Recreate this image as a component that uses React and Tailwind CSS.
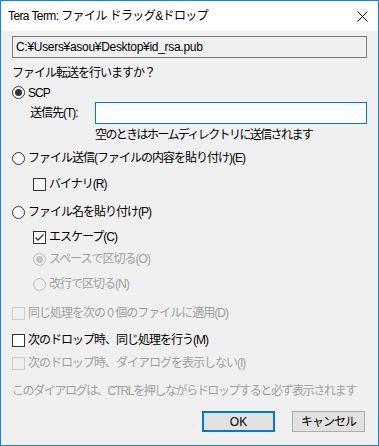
import React from 'react';

const font = { fontFamily: '"Liberation Sans", "Noto Sans CJK JP", sans-serif' };

const Radio = ({ checked, disabled }) => (
  <span
    className={`w-[13px] h-[13px] rounded-full border flex items-center justify-center shrink-0 ${
      disabled ? 'border-[#bcbcbc] bg-[#f0f0f0]' : 'border-[#333333] bg-white'
    }`}
  >
    {checked && (
      <span className={`w-[7px] h-[7px] rounded-full ${disabled ? 'bg-[#c4c4c4]' : 'bg-[#333333]'}`} />
    )}
  </span>
);

const Check = ({ checked, disabled }) => (
  <span
    className={`w-[13px] h-[13px] border flex items-center justify-center shrink-0 ${
      disabled ? 'border-[#cccccc] bg-[#f0f0f0]' : 'border-[#333333] bg-white'
    }`}
  >
    {checked && (
      <svg width="11" height="11" viewBox="0 0 11 11">
        <path d="M1.5 5.5 L4 8 L9.5 2.5" fill="none" stroke="#333333" strokeWidth="1.3" />
      </svg>
    )}
  </span>
);

const Row = ({ className, indent, children }) => (
  <div className={`h-[20px] flex items-center whitespace-nowrap ${indent ? 'pl-[21px]' : ''} ${className || ''}`}>{children}</div>
);

const Label = ({ disabled, children }) => (
  <span className={`ml-[3px] tracking-[-1px] ${disabled ? 'text-[#a0a0a0]' : 'text-black'}`}>{children}</span>
);

const App = () => {
  return (
    <div style={font} className="w-[379px] h-[446px] border border-[#1883d7] bg-[#f0f0f0] flex flex-col text-[12px] leading-none select-none overflow-hidden">
      <div className="h-[30px] bg-white flex items-center justify-between pl-[7px] pr-[10px] shrink-0">
        <span className="text-[12px] text-black tracking-[-0.6px]">Tera Term: ファイル ドラッグ&amp;ドロップ</span>
        <svg width="11" height="11" viewBox="0 0 11 11">
          <path d="M0.5 0.5 L10.5 10.5 M10.5 0.5 L0.5 10.5" stroke="#111" strokeWidth="1" />
        </svg>
      </div>

      <div className="px-[11px] flex flex-col">
        <div className="mt-[5px] h-[22px] border border-[#7a7a7a] bg-[#f0f0f0] flex items-center pl-[3px]">
          <span className="tracking-[-0.3px]">C:¥Users¥asou¥Desktop¥id_rsa.pub</span>
        </div>

        <Row className="mt-[5px]">
          <span className="tracking-[-1px]">ファイル転送を行いますか？</span>
        </Row>

        <div className="h-[19px] flex items-center">
          <Radio checked />
          <Label>SCP</Label>
        </div>

        <div className="h-[22px] flex items-center">
          <span className="w-[83px] pl-[18px] tracking-[-1px]">送信先(T):</span>
          <input className="flex-1 h-[22px] border border-[#0078d7] bg-white outline-none px-1" />
        </div>

        <Row className="mt-[1px] pl-[83px]">
          <span className="tracking-[-1.6px]">空のときはホームディレクトリに送信されます</span>
        </Row>

        <Row className="mt-[3px]">
          <Radio />
          <Label>ファイル送信(ファイルの内容を貼り付け)(E)</Label>
        </Row>

        <Row className="mt-[6px]" indent>
          <Check />
          <Label>バイナリ(R)</Label>
        </Row>

        <Row className="mt-[8px]">
          <Radio />
          <Label>ファイル名を貼り付け(P)</Label>
        </Row>

        <Row className="mt-[5px]" indent>
          <Check checked />
          <Label>エスケープ(C)</Label>
        </Row>

        <Row className="mt-[2px]" indent>
          <Radio checked disabled />
          <Label disabled>スペースで区切る(O)</Label>
        </Row>

        <Row className="mt-[5px]" indent>
          <Radio disabled />
          <Label disabled>改行で区切る(N)</Label>
        </Row>

        <Row className="mt-[9px]">
          <Check disabled />
          <Label disabled>同じ処理を次の 0 個のファイルに適用(D)</Label>
        </Row>

        <Row className="mt-[7px]">
          <Check />
          <Label>次のドロップ時、同じ処理を行う(M)</Label>
        </Row>

        <Row className="mt-[3px]">
          <Check disabled />
          <Label disabled>次のドロップ時、ダイアログを表示しない(I)</Label>
        </Row>

        <Row className="mt-[8px]">
          <span className="text-[#a0a0a0] tracking-[-1.4px]">このダイアログは、CTRLを押しながらドロップすると必ず表示されます</span>
        </Row>

        <div className="mt-[10px] flex justify-end gap-[17px] pr-[2px]">
          <button className="w-[73px] h-[21px] border-2 border-[#0078d7] bg-[#e1e1e1] text-black">OK</button>
          <button className="w-[73px] h-[21px] border border-[#adadad] bg-[#e1e1e1] text-black tracking-[-1px]">キャンセル</button>
        </div>
      </div>
    </div>
  );
};

export default App;
